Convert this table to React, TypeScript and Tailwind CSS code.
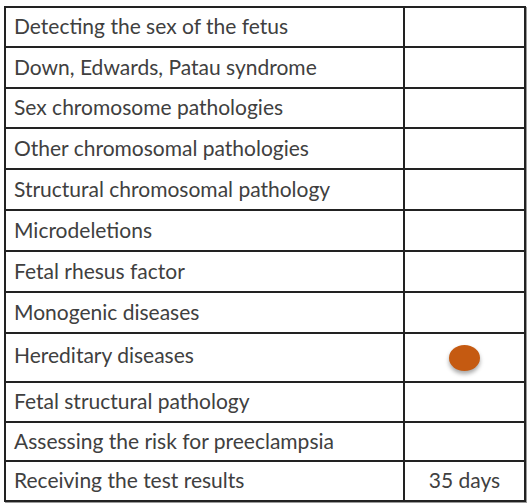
import React from "react";

const rows: { label: string; h: number; right?: React.ReactNode; pb?: string }[] = [
  { label: "Detecting the sex of the fetus", h: 40 },
  { label: "Down, Edwards, Patau syndrome", h: 41 },
  { label: "Sex chromosome pathologies", h: 40 },
  { label: "Other chromosomal pathologies", h: 41 },
  { label: "Structural chromosomal pathology", h: 41 },
  { label: "Microdeletions", h: 41 },
  { label: "Fetal rhesus factor", h: 41 },
  { label: "Monogenic diseases", h: 41 },
  {
    label: "Hereditary diseases",
    h: 49,
    pb: "pb-[6px]",
    right: (
      <div className="w-[31px] h-[26px] rounded-[50%] bg-[#c55a11] shadow-[0_3px_4px_rgba(0,0,0,0.35)] mt-[2px]" />
    ),
  },
  { label: "Fetal structural pathology", h: 40 },
  { label: "Assessing the risk for preeclampsia", h: 39 },
  { label: "Receiving the test results", h: 38, right: <span>35 days</span> },
];

export default function App() {
  return (
    <div className="w-[529px] h-[503px] bg-white pt-[6px] pl-[4px]">
      <div
        className="w-[522px] border-2 border-[#222] shadow-[1px_1px_0_#9a9a9a] text-[#404040] text-[21px]"
        style={{ fontFamily: "Lato, 'Open Sans', sans-serif" }}
      >
        {rows.map((r, i) => (
          <div
            key={i}
            className={`flex ${i < rows.length - 1 ? "border-b-2 border-[#222]" : ""}`}
            style={{ height: r.h }}
          >
            <div className={`w-[399px] border-r-2 border-[#222] flex items-center pl-[8px] ${r.pb ?? "pb-[2px]"}`}>
              {r.label}
            </div>
            <div className="flex-1 flex items-center justify-center pb-[2px]">{r.right}</div>
          </div>
        ))}
      </div>
    </div>
  );
}
